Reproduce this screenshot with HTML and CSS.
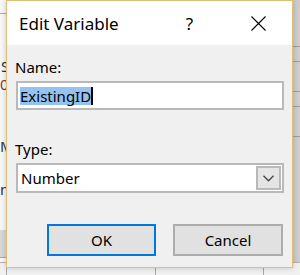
FILE: index.html
```html
<!DOCTYPE html>
<html lang="en">
<head>
    <meta charset="UTF-8">
    <title>Edit Variable</title>
    <link rel="stylesheet" href="styles.css">
</head>
<body>
    <!-- the app window behind the dialog -->
    <div class="app">
        <div class="app-rule"></div>
        <div class="app-text app-text-s">S</div>
        <div class="app-text app-text-o">0</div>
        <div class="app-text app-text-m">M</div>
        <div class="app-text app-text-nt">nt</div>
        <div class="app-block"></div>
        <div class="app-side">
            <div class="side-row"></div>
            <div class="side-row"></div>
            <div class="side-row"></div>
            <div class="side-row"></div>
            <div class="side-row"></div>
        </div>
        <div class="app-footer">
            <div class="footer-cell cell-a"></div>
            <div class="footer-cell cell-b"></div>
            <div class="footer-cell cell-c"></div>
        </div>
    </div>

    <div class="dialog">
        <div class="titlebar">
            <span class="title">Edit Variable</span>
            <span class="help">?</span>
            <span class="close">
                <svg width="15" height="15" viewBox="0 0 15 15">
                    <path d="M0.5 0.5 L14.5 14.5 M14.5 0.5 L0.5 14.5" stroke="#000" stroke-width="1.1" fill="none"/>
                </svg>
            </span>
        </div>
        <div class="dialog-body">
            <div class="field-label">Name:</div>
            <div class="textbox"><span class="selected">ExistingID</span><span class="caret"></span></div>

            <div class="field-label type-label">Type:</div>
            <div class="combo">
                <span class="combo-value">Number</span>
                <span class="combo-button">
                    <svg width="11" height="7" viewBox="0 0 11 7">
                        <polyline points="0.5,0.8 5.5,5.8 10.5,0.8" stroke="#444" stroke-width="1.3" fill="none"/>
                    </svg>
                </span>
            </div>

            <div class="buttons">
                <button class="btn btn-default">OK</button>
                <button class="btn">Cancel</button>
            </div>
        </div>
    </div>
</body>
</html>
```

FILE: styles.css
```css
* {
    box-sizing: border-box;
}

html, body {
    margin: 0;
    width: 300px;
    height: 275px;
    overflow: hidden;
}

body {
    position: relative;
    background: #f8f8f8;
    font-family: "Noto Sans", "Open Sans", sans-serif;
    color: #000;
}

/* background app, mostly hidden */
.app {
    position: absolute;
    inset: 0;
}

.app-rule {
    position: absolute;
    left: 0;
    top: 13px;
    width: 100%;
    height: 1px;
    background: #a9a9a9;
}

.app-text {
    position: absolute;
    left: 0;
    font-size: 15px;
    line-height: 16px;
    color: #333;
}

.app-text-s { left: 1px; top: 58px; }
.app-text-o { top: 76px; color: #8a3a1c; }
.app-text-m { top: 138px; }
.app-text-nt { top: 181px; }

.app-block {
    position: absolute;
    left: 0;
    top: 230px;
    width: 20px;
    height: 28px;
    background: #d8d8d8;
    border-bottom: 1px solid #a6a6a6;
}

.app-side {
    position: absolute;
    left: 288px;
    top: 0;
    width: 12px;
    height: 268px;
    background: #cdcdcd;
    padding-top: 46px;
}

.side-row {
    height: 15px;
    border-top: 1px solid #9c9c9c;
}

.side-row:nth-child(2) { height: 30px; }
.side-row:nth-child(4) { height: 30px; }

.app-footer {
    position: absolute;
    left: 0;
    top: 262px;
    width: 100%;
    height: 13px;
    background: #f1f1f1;
    border-top: 1px solid #b4b4b4;
}

.footer-cell {
    position: absolute;
    top: 0;
    height: 100%;
    border-left: 1px solid #a8a8a8;
}

.cell-a { left: 6px; }
.cell-b { left: 155px; }
.cell-c { left: 263px; }

/* the dialog */
.dialog {
    position: absolute;
    left: 6px;
    top: 0;
    width: 287px;
    height: 268px;
    border: 1px solid #e2bd76;
    background: #f0f0f0;
    display: flex;
    flex-direction: column;
    box-shadow: 0 0 6px rgba(0, 0, 0, 0.2);
}

.titlebar {
    height: 44px;
    background: #fff;
    display: flex;
    align-items: center;
    padding-left: 12px;
}

.title {
    flex: 1;
    font-size: 17px;
}

.help {
    width: 23px;
    margin-right: 34px;
    text-align: center;
    font-size: 17px;
}

.close {
    width: 46px;
    margin-right: 11px;
    display: flex;
    justify-content: center;
}

.dialog-body {
    flex: 1;
    padding: 12px 8px 0 8px;
    display: flex;
    flex-direction: column;
}

.field-label {
    font-size: 15px;
    line-height: 20px;
    margin-bottom: 4px;
}

.type-label {
    margin-top: 29px;
}

.textbox {
    margin-left: 1px;
    height: 29px;
    border: 2px solid #b9b9bc;
    background: #fff;
    display: flex;
    align-items: center;
    padding-left: 2px;
    font-size: 15px;
}

.selected {
    background: #94c3f0;
    line-height: 18px;
}

.caret {
    width: 2px;
    height: 18px;
    background: #000;
}

.combo {
    margin-left: 1px;
    height: 30px;
    border: 2px solid #b9b9bc;
    background: #fff;
    display: flex;
    align-items: center;
    padding-left: 3px;
    padding-right: 1px;
}

.combo-value {
    flex: 1;
    font-size: 15px;
}

.combo-button {
    width: 25px;
    height: 24px;
    background: #e5e5e5;
    border: 2px solid #b9b9bc;
    display: flex;
    align-items: center;
    justify-content: center;
}

.buttons {
    margin-top: 31px;
    display: flex;
    justify-content: flex-end;
    gap: 17px;
    padding-right: 1px;
}

.btn {
    width: 110px;
    height: 32px;
    padding: 0;
    border: 2px solid #adadad;
    background: #e1e1e1;
    font-family: "Noto Sans", "Open Sans", sans-serif;
    font-size: 15px;
    color: #000;
}

.btn-default {
    width: 109px;
    border-color: #0078d7;
}
```
